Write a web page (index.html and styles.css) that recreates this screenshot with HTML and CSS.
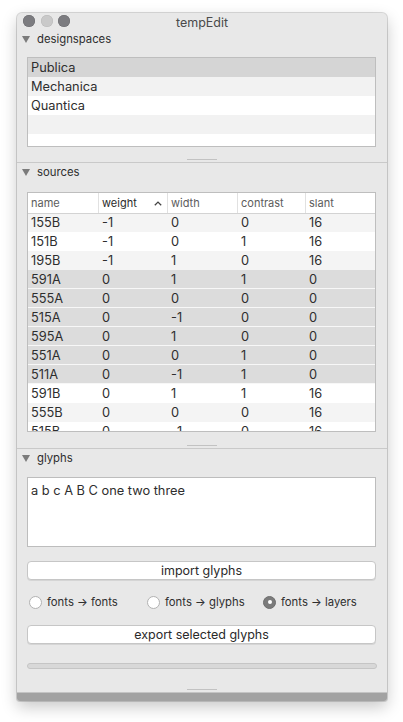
FILE: index.html
```html
<!DOCTYPE html>
<html>
<head>
<meta charset="utf-8">
<link rel="stylesheet" href="styles.css">
</head>
<body>
<div class="window">
  <div class="titlebar">
    <div class="lights">
      <span class="light dark"></span>
      <span class="light pale"></span>
      <span class="light dark"></span>
    </div>
    <div class="title">tempEdit</div>
  </div>

  <section class="sec sec1">
    <div class="sec-head"><span class="tri"></span><span>designspaces</span></div>
    <div class="list">
      <div class="lrow sel">Publica</div>
      <div class="lrow alt">Mechanica</div>
      <div class="lrow">Quantica</div>
      <div class="lrow alt"></div>
      <div class="lrow"></div>
    </div>
    <div class="handle h1"></div>
  </section>

  <section class="sec sec2">
    <div class="sec-head"><span class="tri"></span><span>sources</span></div>
    <div class="table">
      <div class="thead">
        <div class="th">name</div>
        <div class="th sorted">weight<svg class="caret" width="8" height="5" viewBox="0 0 8 5"><path d="M0.8 4.3 L4 1.1 L7.2 4.3" fill="none" stroke="#444" stroke-width="1.3"/></svg></div>
        <div class="th">width</div>
        <div class="th">contrast</div>
        <div class="th">slant</div>
      </div>
      <div class="tbody">
        <div class="tr alt first"><span>155B</span><span>-1</span><span>0</span><span>0</span><span>16</span></div>
        <div class="tr"><span>151B</span><span>-1</span><span>0</span><span>1</span><span>16</span></div>
        <div class="tr alt"><span>195B</span><span>-1</span><span>1</span><span>0</span><span>16</span></div>
        <div class="tr sel"><span>591A</span><span>0</span><span>1</span><span>1</span><span>0</span></div>
        <div class="tr sel"><span>555A</span><span>0</span><span>0</span><span>0</span><span>0</span></div>
        <div class="tr sel"><span>515A</span><span>0</span><span>-1</span><span>0</span><span>0</span></div>
        <div class="tr sel"><span>595A</span><span>0</span><span>1</span><span>0</span><span>0</span></div>
        <div class="tr sel"><span>551A</span><span>0</span><span>0</span><span>1</span><span>0</span></div>
        <div class="tr sel"><span>511A</span><span>0</span><span>-1</span><span>1</span><span>0</span></div>
        <div class="tr"><span>591B</span><span>0</span><span>1</span><span>1</span><span>16</span></div>
        <div class="tr alt"><span>555B</span><span>0</span><span>0</span><span>0</span><span>16</span></div>
        <div class="tr"><span>515B</span><span>0</span><span>-1</span><span>0</span><span>16</span></div>
      </div>
    </div>
    <div class="handle h2"></div>
  </section>

  <section class="sec sec3">
    <div class="sec-head"><span class="tri"></span><span>glyphs</span></div>
    <div class="textbox">a b c A B C one two three</div>
    <div class="btn b1">import glyphs</div>
    <div class="radios">
      <label class="radio"><span class="dot"></span>fonts → fonts</label>
      <label class="radio"><span class="dot"></span>fonts → glyphs</label>
      <label class="radio on"><span class="dot"></span>fonts → layers</label>
    </div>
    <div class="btn b2">export selected glyphs</div>
    <div class="progress"></div>
    <div class="handle h3"></div>
  </section>

  <div class="bottombar"></div>
</div>
</body>
</html>
```

FILE: styles.css
```css
* { box-sizing: border-box; }
html, body { margin: 0; padding: 0; background: #ffffff; }
body {
  font-family: Inter, "Liberation Sans", sans-serif;
  color: #2e2e2e;
  width: 403px;
  height: 722px;
  overflow: hidden;
}
.window {
  margin: 13px 0 0 17px;
  width: 370px;
  height: 688px;
  background: #e8e8e8;
  border-radius: 5px 5px 3px 3px;
  box-shadow: 0 0 0 1px rgba(0,0,0,0.14), 0 6px 16px rgba(0,0,0,0.22);
  display: flex;
  flex-direction: column;
  overflow: hidden;
}
.titlebar {
  height: 17px;
  position: relative;
  display: flex;
  align-items: center;
  justify-content: center;
}
.lights {
  position: absolute;
  left: 6px;
  top: 2px;
  display: flex;
  gap: 5.5px;
}
.light {
  width: 12px;
  height: 12px;
  border-radius: 50%;
  display: block;
}
.light.dark { background: #7c7c80; box-shadow: inset 0 0 0 0.5px #6a6a6e; }
.light.pale { background: #c9c9c9; box-shadow: inset 0 0 0 0.5px #b8b8b8; }
.title {
  font-size: 12.5px;
  color: #4a4a4a;
  line-height: 17px;
  padding-top: 1px;
}
.sec { display: flex; flex-direction: column; padding: 0 11px 0 10px; }
.sec2, .sec3 { border-top: 1px solid #c9c9c9; }
.sec1 { height: 132px; }
.sec2 { height: 286px; }
.sec3 { height: 244px; }
.sec-head {
  height: 17px;
  display: flex;
  align-items: center;
  font-size: 11.3px;
  color: #2e2e2e;
  margin-left: -10px;
  padding-left: 5px;
}
.sec2 .sec-head, .sec3 .sec-head { height: 18px; }
.tri {
  width: 0; height: 0;
  border-left: 4px solid transparent;
  border-right: 4px solid transparent;
  border-top: 7px solid #7b7b7b;
  margin-right: 7px;
  margin-top: 1px;
}
.list {
  margin-top: 10px;
  height: 90px;
  border: 1px solid #bebebe;
  background: #fff;
  overflow: hidden;
}
.lrow {
  height: 19px;
  line-height: 19px;
  padding-left: 3px;
  font-size: 12.8px;
  color: #2e2e2e;
  background: #fff;
}
.lrow.alt { background: #f2f2f2; }
.lrow.sel { background: #d5d5d5; }
.handle {
  width: 30px;
  height: 1px;
  background: #c2c2c2;
  align-self: center;
  margin-left: 1px;
}
.h1 { margin-top: 12px; }
.h2 { margin-top: 13px; }
.h3 { margin-top: auto; margin-bottom: 2px; }
.table {
  margin-top: 11px;
  height: 240px;
  border: 1px solid #bebebe;
  background: #fff;
  display: flex;
  flex-direction: column;
  overflow: hidden;
}
.thead, .tr {
  display: grid;
  grid-template-columns: 70px 69px 70px 68px 70px;
}
.thead {
  height: 21px;
  border-bottom: 1px solid #d3d3d3;
  background: #fff;
  position: relative;
  z-index: 1;
}
.th {
  font-size: 11px;
  color: #5c5c5c;
  padding-left: 3px;
  display: flex;
  align-items: center;
  position: relative;
}
.th + .th { border-left: 1px solid #e1e1e1; }
.th.sorted { color: #2a2a2a; }
.caret { position: absolute; right: 5px; top: 8px; }
.tbody { flex: 1; overflow: hidden; }
.tr {
  height: 19px;
  font-size: 12.8px;
  color: #2e2e2e;
  background: #fff;
}
.tr.first { margin-top: -1px; }
.tr span { padding-left: 3px; line-height: 19px; }
.tr span + span { padding-left: 4px; }
.tr.alt { background: #f4f4f4; }
.tr.sel { background: #dcdcdc; box-shadow: inset 0 -1px 0 #f7f7f7; }
.textbox {
  margin-top: 10px;
  height: 70px;
  border: 1px solid #bdbdbd;
  background: #fff;
  font-size: 12.8px;
  color: #2e2e2e;
  padding: 5px 3px;
  line-height: 16px;
}
.btn {
  height: 19px;
  background: #fff;
  border: 1px solid #c6c6c6;
  border-radius: 4px;
  box-shadow: 0 1px 0.5px rgba(0,0,0,0.08);
  font-size: 12.5px;
  color: #2a2a2a;
  display: flex;
  align-items: center;
  justify-content: center;
}
.b1 { margin-top: 14px; }
.b2 { margin-top: 14px; }
.radios {
  margin-top: 13px;
  height: 18px;
  display: grid;
  grid-template-columns: 118px 116px 1fr;
  padding-left: 2px;
}
.radio {
  display: flex;
  align-items: center;
  font-size: 11.3px;
  color: #2e2e2e;
}
.dot {
  width: 13px;
  height: 13px;
  border-radius: 50%;
  background: #fff;
  border: 1px solid #b2b2b2;
  margin-right: 5px;
  display: flex;
  align-items: center;
  justify-content: center;
  flex: none;
}
.radio.on .dot { background: #7b7b7b; border-color: #6e6e6e; }
.radio.on .dot::after {
  content: "";
  width: 4px;
  height: 4px;
  border-radius: 50%;
  background: #fff;
}
.progress {
  margin-top: 19px;
  height: 6px;
  margin-left: -0.5px;
  margin-right: -1px;
  border: 1px solid #c5c5c5;
  background: #d8d8d8;
  border-radius: 3px;
}
.bottombar {
  height: 9px;
  background: #a2a2a2;
  border-top: 1px solid #c4c4c4;
}
```
